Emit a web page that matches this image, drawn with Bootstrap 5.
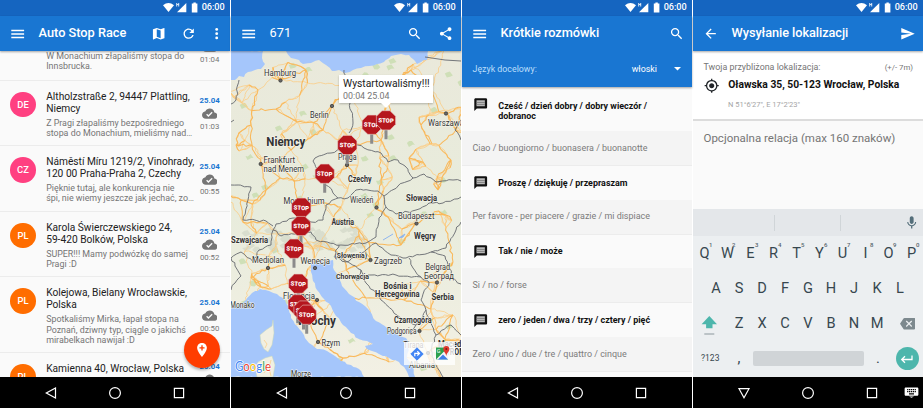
<!DOCTYPE html>
<html lang="pl">
<head>
<meta charset="utf-8">
<meta name="viewport" content="width=device-width, initial-scale=1">
<title>Auto Stop Race</title>
<link href="https://cdn.jsdelivr.net/npm/bootstrap@5.3.0/dist/css/bootstrap.min.css" rel="stylesheet">
<style>
  body{width:923px;height:408px;overflow:hidden;background:#fff;font-family:Roboto,"Noto Sans",sans-serif;line-height:1}
  svg{display:block;flex:none}
  .phones{gap:1px}
  .phone{width:230px;height:408px;background:#fafafa}
  .statusbar{height:16px;background:#1565c0;color:#fff;font-size:9.1px;font-weight:500;padding-right:5.3px;gap:2.6px}
  .appbar{height:35px;background:#1976d2;color:#fff;padding:0 10.4px}
  .appbar .caption{font-size:12.75px;font-weight:500;padding-left:12.8px;white-space:nowrap}
  .phrases .caption{letter-spacing:-.05px}
  .send .caption{letter-spacing:-.07px}
  .lifted{box-shadow:0 1px 2px rgba(0,0,0,.35);z-index:2;position:relative}
  .ic{width:15.4px;height:15.4px;fill:currentColor}
  .dots3{margin:0 -4.6px 0 -4px}
  .reload{margin:0 16px 0 15px}
  .pull{margin-right:-3px}
  .sysnav{height:31px;background:#000;padding:0 43.3px}
  .screen{height:326px;overflow:hidden}
  .feed{margin-top:-36px}
  .entry{border-bottom:1px solid #ececec;padding:10px 0 8px 10.2px;height:65.6px;background:#fafafa}
  .entry.tall{height:76px}
  .face{width:25.6px;height:25.6px;margin-top:1px;font-size:9.4px;color:#fff;font-weight:500}
  .pink{background:#ff4081}.orange{background:#ff6d00}
  .words{margin-left:10.4px;width:149.500px;white-space:nowrap}
  .place{font-size:10.2px;line-height:12.1px;color:#212121}
  .note{font-size:8.88px;line-height:10.25px;color:#757575;margin-top:2.8px}
  .stamp{width:28px;font-size:7.8px;color:#757575;gap:1.2px}
  .stamp b{color:#1976d2;font-weight:700}
  .fabzone{right:0;bottom:31px;width:64px;height:60px}
  .fab{right:10px;bottom:9.3px;width:36px;height:36px;background:#ff3d00;box-shadow:0 2px 3px rgba(0,0,0,.3)}
  .lang{height:36px;background:#1976d2;padding:0 11px 0 10.5px;font-size:8.85px;color:#bbdefb}
  .lang svg{margin-left:17px}
  .phraselist{height:290px;overflow:hidden}
  .ask{background:#fafafa;height:34.7px;padding:0 11px;color:#111;font-size:8.95px;font-weight:700;line-height:10.4px;border-top:1px solid #ececec}
  .ask.two{height:44px;border:0}
  .ask.two .ic{margin-top:10px}
  .ask.two .words2{margin-top:13.5px}
  .ask .words2{padding-left:9.9px}
  .reply{background:#f4f4f4;height:34px;padding-left:10.5px;font-size:8.95px;color:#7b7b7b}
  .where{background:#fff;height:68px;padding:12.4px 10px 0 10.5px;color:#757575;font-size:8.9px}
  .place-row{margin-top:5.500px}
  .exact{font-size:10.3px;font-weight:700;color:#111;padding-left:9.3px}
  .gps{font-size:7.5px;color:#a5a5a5;padding-left:24.5px;margin-top:7.5px}
  .margin-err{font-size:7.8px}
  .rel{height:88px;border-top:2px solid #dcdcdc;padding:11.5px 10.5px;font-size:11.5px;color:#757575}
  .keys{height:168px;margin-top:2px;background:#eceff1;color:#37474f;font-size:14.6px}
  .hints{height:27px;background:#e4e7ea}
  .hints i{width:1px;height:16px;background:#d0d5d8}
  .hints i:first-child{margin-left:81px}
  .hints i+i{margin-left:65px}
  .krow{height:35px}
  .key{width:23px;text-align:center;position:relative}
  .key sup{position:absolute;font-size:6px;font-weight:500;top:-1px;left:16px;color:#55656d}
  .sym{width:34.5px;font-size:8.5px}
  .space{width:111px;height:15px;background:#d0d4d7;border-radius:2px;margin:0 2.5px}
  .enter{width:23px;height:23px;background:#4db6ac;color:#fff;margin-left:6px}
  .bubble{left:108px;top:24px;width:94px;height:28px;background:#fff;padding:4px 0 0 4px;white-space:nowrap;box-shadow:0 1px 2px rgba(0,0,0,.25);font-size:10.3px;color:#212121}
  .bubble small{display:block;font-size:8.9px;color:#757575;margin-top:3px}
  .bubble svg{left:42px;top:28px}
  .mapbtns{left:173px;top:291px;width:51px;height:23px;background:rgba(255,255,255,.78)}
</style>
<script src="https://cdn.jsdelivr.net/npm/bootstrap@5.3.0/dist/js/bootstrap.bundle.min.js"></script>
</head>
<body>
<svg width="0" height="0" class="position-absolute">
  <symbol id="menu" viewBox="0 0 24 24"><path d="M2 19h20v-2.400H2V19zm0-5.400h20v-2.400H2v2.400zm0-7.800v2.400h20V5.800H2z"/></symbol>
  <symbol id="map" viewBox="0 0 24 24"><path d="M20.5 3l-.16.03L15 5.1 9 3 3.36 4.9c-.21.07-.36.25-.36.48V20.5c0 .28.22.5.5.5l.16-.03L9 18.9l6 2.1 5.64-1.9c.21-.07.36-.25.36-.48V3.5c0-.28-.22-.5-.5-.5zM15 19l-6-2.11V5l6 2.11V19z"/></symbol>
  <symbol id="refresh" viewBox="0 0 24 24"><path d="M17.65 6.35A7.958 7.958 0 0012 4c-4.42 0-7.99 3.58-7.99 8s3.57 8 7.99 8c3.73 0 6.84-2.55 7.73-6h-2.08A5.99 5.99 0 0112 18c-3.31 0-6-2.69-6-6s2.69-6 6-6c1.66 0 3.14.69 4.22 1.78L13 11h7V4l-2.35 2.35z"/></symbol>
  <symbol id="more" viewBox="0 0 24 24"><circle cx="12" cy="5.4" r="2.2"/><circle cx="12" cy="12" r="2.2"/><circle cx="12" cy="18.6" r="2.2"/></symbol>
  <symbol id="search" viewBox="0 0 24 24"><path d="M15.5 14h-.79l-.28-.27A6.471 6.471 0 0016 9.5 6.5 6.5 0 109.5 16c1.61 0 3.09-.59 4.23-1.57l.27.28v.79l5 4.99L20.49 19l-4.99-5zm-6 0C7.01 14 5 11.99 5 9.5S7.01 5 9.5 5 14 7.01 14 9.5 11.99 14 9.5 14z"/></symbol>
  <symbol id="share" viewBox="0 0 24 24"><path d="M18 16.08c-.76 0-1.44.3-1.96.77L8.91 12.7c.05-.23.09-.46.09-.7s-.04-.47-.09-.7l7.05-4.11c.54.5 1.25.81 2.04.81 1.66 0 3-1.34 3-3s-1.34-3-3-3-3 1.34-3 3c0 .24.04.47.09.7L8.04 9.81C7.5 9.31 6.79 9 6 9c-1.66 0-3 1.34-3 3s1.34 3 3 3c.79 0 1.5-.31 2.04-.81l7.12 4.16c-.05.21-.08.43-.08.65 0 1.61 1.31 2.92 2.92 2.92s2.92-1.31 2.92-2.92-1.31-2.92-2.92-2.92z"/></symbol>
  <symbol id="send" viewBox="0 0 24 24"><path d="M2.01 21L23 12 2.01 3 2 10l15 2-15 2z"/></symbol>
  <symbol id="back" viewBox="0 0 24 24"><path d="M20 11H7.83l5.59-5.59L12 4l-8 8 8 8 1.41-1.41L7.83 13H20v-2z"/></symbol>
  <symbol id="target" viewBox="0 0 24 24"><path d="M12 8c-2.21 0-4 1.79-4 4s1.79 4 4 4 4-1.79 4-4-1.79-4-4-4zm8.94 3A8.994 8.994 0 0013 3.06V1h-2v2.06A8.994 8.994 0 003.06 11H1v2h2.06A8.994 8.994 0 0011 20.94V23h2v-2.06A8.994 8.994 0 0020.94 13H23v-2h-2.06zM12 19c-3.87 0-7-3.13-7-7s3.13-7 7-7 7 3.13 7 7-3.13 7-7 7z"/></symbol>
  <symbol id="cloud" viewBox="0 0 24 24"><path d="M19.35 10.04C18.67 6.59 15.64 4 12 4 9.11 4 6.6 5.64 5.35 8.04 2.34 8.36 0 10.91 0 14c0 3.31 2.69 6 6 6h13c2.76 0 5-2.24 5-5 0-2.64-2.05-4.78-4.65-4.96zM10 17l-3.5-3.5 1.41-1.41L10 14.17 15.18 9l1.41 1.41L10 17z"/></symbol>
  <symbol id="chat" viewBox="0 0 24 24"><path d="M20 2H4c-1.1 0-2 .9-2 2v18l4-4h14c1.1 0 2-.9 2-2V4c0-1.1-.9-2-2-2z"/><path fill="#b8b8b8" d="M5.500 5.200h13v9.400h-13z"/><path fill="#777" d="M5.500 7.800h13v1h-13zM5.500 11h13v1h-13z"/></symbol>
  <symbol id="mic" viewBox="0 0 24 24"><path fill="#546e7a" d="M12 14c1.660 0 3-1.340 3-3V5c0-1.660-1.340-3-3-3S9 3.340 9 5v6c0 1.660 1.340 3 3 3zm5.300-3c0 3-2.540 5.100-5.300 5.100S6.700 14 6.700 11H5c0 3.410 2.720 6.230 6 6.720V21h2v-3.280c3.280-.48 6-3.300 6-6.720h-1.700z"/></symbol>
  <symbol id="erase" viewBox="0 0 24 24"><path fill="#7d898e" d="M22 3H7c-.69 0-1.230.35-1.590.88L0 12l5.410 8.110c.36.53.9.89 1.590.89h15c1.100 0 2-.9 2-2V5c0-1.100-.9-2-2-2zm-3 12.590L17.590 17 14 13.410 10.410 17 9 15.590 12.590 12 9 8.410 10.410 7 14 10.590 17.590 7 19 8.410 15.410 12 19 15.590z"/></symbol>
  <symbol id="kbd" viewBox="0 0 24 24"><path d="M21 4H3c-1.100 0-2 .9-2 2v9c0 1.100.9 2 2 2h18c1.100 0 2-.9 2-2V6c0-1.100-.9-2-2-2zm-10 2.500h2v2h-2zm0 3h2v2h-2zm-3-3h2v2H8zm0 3h2v2H8zm-1 2H5v-2h2zm0-3H5v-2h2zM16 15H8v-2h8zm0-3.500h-2v-2h2zm0-3h-2v-2h2zm3 3h-2v-2h2zm0-3h-2v-2h2zM8 18.500h8L12 20.500z"/></symbol>
  <symbol id="signals" viewBox="0 0 36 12"><g fill="#fff"><path d="M0 3.200Q5.500-1.300 11 3.200L5.500 10z"/><path d="M23.300 1v9.300H14z"/><path d="M13.200 1h1v1h1V1h1v3.400h-1V3.100h-1v1.300h-1z" opacity=".85"/><path d="M28.800 1.400h1.600V.5h2.400v.9h1.600v9h-5.600z"/></g></symbol>
  <symbol id="triL" viewBox="0 0 16 16"><path d="M12.500 3v10L3.300 8z" fill="none" stroke="#fff" stroke-width="1.200"/></symbol>
  <symbol id="triD" viewBox="0 0 16 16"><path d="M3 3.700h10L8 12.700z" fill="none" stroke="#fff" stroke-width="1.200"/></symbol>
  <symbol id="home" viewBox="0 0 16 16"><circle cx="8" cy="8" r="5.400" fill="none" stroke="#fff" stroke-width="1.200"/></symbol>
  <symbol id="recent" viewBox="0 0 16 16"><path d="M3.400 3.400h9.200v9.200H3.400z" fill="none" stroke="#fff" stroke-width="1.200"/></symbol>
  <symbol id="stop" viewBox="-11 -11 22 32"><path d="M-1.500 8h3v11h-3z" fill="#8b8b8b"/><path d="M-4-9.600h8L9.600-4v8L4 9.600h-8L-9.600 4v-8z" fill="#b5161d" stroke="#e9c9c4" stroke-width=".6"/><text x="0" y="2.300" font-size="6" font-weight="900" fill="#fff" text-anchor="middle" transform="rotate(3)">STOP</text></symbol>
</svg>

<main class="phones d-flex">

  <!-- journal -->
  <section class="phone position-relative flex-shrink-0 d-flex flex-column">
    <div class="statusbar d-flex align-items-center justify-content-end"><svg width="36" height="12"><use href="#signals"/></svg><span>06:00</span></div>
    <div class="appbar lifted d-flex align-items-center">
      <svg class="ic"><use href="#menu"/></svg><span class="caption me-auto">Auto Stop Race</span>
      <svg class="ic"><use href="#map"/></svg><svg class="ic reload"><use href="#refresh"/></svg><svg class="ic dots3"><use href="#more"/></svg>
    </div>
    <div class="screen">
      <div class="feed">
        <div class="entry d-flex"><div class="face"></div><div class="words d-flex flex-column justify-content-end"><div class="note">W Monachium złapaliśmy stopa do<br>Innsbrucka.</div></div><div class="stamp d-flex flex-column align-items-center justify-content-end"><svg class="ic"><use href="#cloud"/></svg><span class="mb-2">01:04</span></div></div>
        <div class="entry d-flex"><div class="face pink rounded-circle d-flex align-items-center justify-content-center">DE</div><div class="words"><div class="place">Altholzstraße 2, 94447 Plattling,<br>Niemcy</div><div class="note">Z Pragi złapaliśmy bezpośredniego<br>stopa do Monachium, mieliśmy nad…</div></div><div class="stamp d-flex flex-column align-items-center justify-content-center"><b>25.04</b><svg class="ic"><use href="#cloud"/></svg><span>01:03</span></div></div>
        <div class="entry d-flex"><div class="face pink rounded-circle d-flex align-items-center justify-content-center">CZ</div><div class="words"><div class="place">Náměstí Míru 1219/2, Vinohrady,<br>120 00 Praha-Praha 2, Czechy</div><div class="note">Pięknie tutaj, ale konkurencja nie<br>śpi, nie wiemy jeszcze jak jechać, zo…</div></div><div class="stamp d-flex flex-column align-items-center justify-content-center"><b>25.04</b><svg class="ic"><use href="#cloud"/></svg><span>00:55</span></div></div>
        <div class="entry d-flex"><div class="face orange rounded-circle d-flex align-items-center justify-content-center">PL</div><div class="words"><div class="place">Karola Świerczewskiego 24,<br>59-420 Bolków, Polska</div><div class="note">SUPER!!! Mamy podwózkę do samej<br>Pragi :D</div></div><div class="stamp d-flex flex-column align-items-center justify-content-center"><b>25.04</b><svg class="ic"><use href="#cloud"/></svg><span>00:52</span></div></div>
        <div class="entry tall d-flex"><div class="face orange rounded-circle d-flex align-items-center justify-content-center">PL</div><div class="words"><div class="place">Kolejowa, Bielany Wrocławskie,<br>Polska</div><div class="note">Spotkaliśmy Mirka, łapał stopa na<br>Poznań, dziwny typ, ciągle o jakichś<br>mirabelkach nawijał :D</div></div><div class="stamp d-flex flex-column align-items-center justify-content-center"><b>25.04</b><svg class="ic"><use href="#cloud"/></svg><span>00:50</span></div></div>
        <div class="entry d-flex"><div class="face orange rounded-circle d-flex align-items-center justify-content-center">PL</div><div class="words"><div class="place">Kamienna 40, Wrocław, Polska</div></div><div class="stamp d-flex flex-column align-items-center"><b>25.04</b><svg class="ic"><use href="#cloud"/></svg></div></div>
      </div>
    </div>
    <div class="fabzone position-absolute">
      <div class="fab position-absolute rounded-circle d-flex align-items-center justify-content-center"><svg width="16" height="16" viewBox="0 0 24 24"><path fill="#fff" d="M12 1.500c-4.100 0-7.300 3.100-7.300 7.200C4.700 14.100 12 22.500 12 22.500s7.300-8.400 7.300-13.800c0-4.100-3.200-7.200-7.300-7.200z"/><path fill="#ff3d00" d="M11 5h2v2.800h2.800v2H13v2.800h-2V9.800H8.200v-2H11z"/></svg></div>
    </div>
    <div class="sysnav d-flex align-items-center justify-content-between"><svg width="16" height="16"><use href="#triL"/></svg><svg width="16" height="16"><use href="#home"/></svg><svg width="16" height="16"><use href="#recent"/></svg></div>
  </section>

  <!-- route map -->
  <section class="phone position-relative flex-shrink-0 d-flex flex-column">
    <div class="statusbar d-flex align-items-center justify-content-end"><svg width="36" height="12"><use href="#signals"/></svg><span>06:00</span></div>
    <div class="appbar lifted d-flex align-items-center">
      <svg class="ic"><use href="#menu"/></svg><span class="caption me-auto fw-normal">671</span>
      <svg class="ic me-3"><use href="#search"/></svg><svg class="ic pull"><use href="#share"/></svg>
    </div>
    <div class="screen position-relative">
      <svg id="europe" width="230" height="326" viewBox="0 51 230 326" font-family="Roboto,sans-serif">
        <defs>
          <linearGradient id="soil" x1="0" y1="0" x2="0" y2="1"><stop offset="0" stop-color="#eae9db"/><stop offset=".5" stop-color="#e8ecdc"/><stop offset="1" stop-color="#f3f0e4"/></linearGradient>
        </defs>
        <rect y="51" width="230" height="326" fill="url(#soil)"/>
        <g id="woods" fill="#c6dcab" opacity=".75"></g>
        <g id="alps" fill="#d3d8c8" opacity=".7"></g>
        <g id="roads" fill="none" stroke-linejoin="round"></g>
        <g id="seas" fill="#a5c6fb"></g>
        <g fill="#f1efe2" stroke="#c8d9b8" stroke-width=".5"><path d="M42 320l-1 6-6 4-6 5 1 8 3 6 4 3 4-7 2-12z"/><path d="M41 356l-7 2-7 4-3 5 2 10h16l2-12z"/></g>
        <path d="M33 340l3 4-2 4M32 362l4 5-3 6M40 360l-2 8 2 8" fill="none" stroke="#fbcf8a" stroke-width=".8"/>
        <path d="M152 240l10-6M168 238l6-4-2 3z" fill="#8fb6ee" stroke="#8fb6ee"/>
        <g id="borders" fill="none" stroke="#6d7075" stroke-width=".95" stroke-linejoin="round"></g>
        <g id="dots" fill="#666" stroke="#333" stroke-width=".7"></g>
        <g id="labels" fill="#333" stroke="#f7f6ee" stroke-width="1.100" paint-order="stroke"></g>
        <g id="signs"></g>
        <g font-size="13.500" font-family="Lato,sans-serif" stroke="#fff" stroke-width="1.400" paint-order="stroke"><text x="4" y="371" textLength="36" lengthAdjust="spacingAndGlyphs"><tspan fill="#4285f4">G</tspan><tspan fill="#ea4335">o</tspan><tspan fill="#fbbc05">o</tspan><tspan fill="#4285f4">g</tspan><tspan fill="#34a853">l</tspan><tspan fill="#ea4335">e</tspan></text></g>
      </svg>
      <div class="bubble position-absolute">Wystartowaliśmy!!!<small>00:04 25.04</small><svg class="position-absolute" width="10" height="5"><path d="M0 0h10L5 5z" fill="#fff"/></svg></div>
      <div class="mapbtns position-absolute d-flex align-items-center justify-content-around">
        <svg width="14" height="14" viewBox="0 0 14 14"><path d="M7 .8L13.200 7 7 13.200.8 7z" fill="#4285f4" stroke="#4285f4" stroke-linejoin="round"/><path d="M4.800 9.300V6.400h4M7.300 4.300l2.200 2.100-2.200 2.100" fill="none" stroke="#fff" stroke-width="1.200"/></svg>
        <svg width="15" height="15" viewBox="0 0 15 15"><path d="M1 1.500h12v12H1z" fill="#2da04e"/><path d="M1 13.500L12.500 2H13v11.500z" fill="#f5f5f5"/><path d="M3 13.500l5-5 5 5z" fill="#3f7fe8"/><text x="1.800" y="6.500" font-size="5.500" fill="#fff">G</text><path d="M11.300 0a3 3 0 013 3c0 2.500-2.300 3.500-3 7-.7-3.500-3-4.500-3-7a3 3 0 013-3z" fill="#e0392c"/><circle cx="11.300" cy="3" r="1" fill="#7d1a12"/></svg>
      </div>
    </div>
    <div class="sysnav d-flex align-items-center justify-content-between"><svg width="16" height="16"><use href="#triL"/></svg><svg width="16" height="16"><use href="#home"/></svg><svg width="16" height="16"><use href="#recent"/></svg></div>
  </section>

  <!-- phrasebook -->
  <section class="phone phrases flex-shrink-0 d-flex flex-column">
    <div class="statusbar d-flex align-items-center justify-content-end"><svg width="36" height="12"><use href="#signals"/></svg><span>06:00</span></div>
    <div class="lifted">
      <div class="appbar d-flex align-items-center"><svg class="ic"><use href="#menu"/></svg><span class="caption me-auto">Krótkie rozmówki</span><svg class="ic pull"><use href="#search"/></svg></div>
      <div class="lang d-flex align-items-center"><span class="me-auto">Język docelowy:</span><span class="text-white">włoski</span><svg width="7" height="4"><path d="M0 0h7L3.500 3.600z" fill="#fff"/></svg></div>
    </div>
    <div class="phraselist">
      <div class="ask two d-flex"><svg class="ic"><use href="#chat"/></svg><div class="words2">Cześć / dzień dobry / dobry wieczór /<br>dobranoc</div></div>
      <div class="reply d-flex align-items-center">Ciao / buongiorno / buonasera / buonanotte</div>
      <div class="ask d-flex align-items-center"><svg class="ic"><use href="#chat"/></svg><div class="words2">Proszę / dziękuję / przepraszam</div></div>
      <div class="reply d-flex align-items-center">Per favore - per piacere / grazie / mi dispiace</div>
      <div class="ask d-flex align-items-center"><svg class="ic"><use href="#chat"/></svg><div class="words2">Tak / nie / może</div></div>
      <div class="reply d-flex align-items-center">Si / no / forse</div>
      <div class="ask d-flex align-items-center"><svg class="ic"><use href="#chat"/></svg><div class="words2">zero / jeden / dwa / trzy / cztery / pięć</div></div>
      <div class="reply d-flex align-items-center">Zero / uno / due / tre / quattro / cinque</div>
      <div class="ask"></div>
    </div>
    <div class="sysnav d-flex align-items-center justify-content-between"><svg width="16" height="16"><use href="#triL"/></svg><svg width="16" height="16"><use href="#home"/></svg><svg width="16" height="16"><use href="#recent"/></svg></div>
  </section>

  <!-- send location -->
  <section class="phone send flex-shrink-0 d-flex flex-column">
    <div class="statusbar d-flex align-items-center justify-content-end"><svg width="36" height="12"><use href="#signals"/></svg><span>06:00</span></div>
    <div class="appbar lifted d-flex align-items-center"><svg class="ic"><use href="#back"/></svg><span class="caption me-auto">Wysyłanie lokalizacji</span><svg class="ic pull"><use href="#send"/></svg></div>
    <div class="where">
      <div class="d-flex justify-content-between align-items-center"><span>Twoja przybliżona lokalizacja:</span><span class="margin-err">(+/- 7m)</span></div>
      <div class="place-row d-flex align-items-center text-dark"><svg class="ic"><use href="#target"/></svg><span class="exact">Oławska 35, 50-123 Wrocław, Polska</span></div>
      <div class="gps">N 51°6'27", E 17°2'23"</div>
    </div>
    <div class="rel">Opcjonalna relacja (max 160 znaków)</div>
    <div class="keys">
      <div class="hints d-flex align-items-center"><i></i><i></i><svg class="ic ms-auto me-1"><use href="#mic"/></svg></div>
      <div class="krow d-flex align-items-center"><span class="key">Q<sup>1</sup></span><span class="key">W<sup>2</sup></span><span class="key">E<sup>3</sup></span><span class="key">R<sup>4</sup></span><span class="key">T<sup>5</sup></span><span class="key">Y<sup>6</sup></span><span class="key">U<sup>7</sup></span><span class="key">I<sup>8</sup></span><span class="key">O<sup>9</sup></span><span class="key">P<sup>0</sup></span></div>
      <div class="krow d-flex align-items-center justify-content-center"><span class="key">A</span><span class="key">S</span><span class="key">D</span><span class="key">F</span><span class="key">G</span><span class="key">H</span><span class="key">J</span><span class="key">K</span><span class="key">L</span></div>
      <div class="krow d-flex align-items-center"><svg width="34.500" height="22" viewBox="0 0 34.500 22"><path d="M16.300 3L24 11.300h-4.500v4h-6.400v-4H8.600z" fill="#4db6ac"/><path d="M11.300 21h10" stroke="#8b979c" stroke-width="1"/></svg><span class="key">Z</span><span class="key">X</span><span class="key">C</span><span class="key">V</span><span class="key">B</span><span class="key">N</span><span class="key">M</span><svg class="ic ms-auto me-2"><use href="#erase"/></svg></div>
      <div class="krow d-flex align-items-center"><span class="sym text-center">?123</span><span class="key">,</span><span class="space"></span><span class="key">.</span><span class="enter rounded-circle d-flex align-items-center justify-content-center"><svg width="14" height="10" viewBox="0 0 14 10"><path d="M12 1.500v4H2M5 2.200L1.700 5.500 5 8.800" fill="none" stroke="#fff" stroke-width="1.300"/></svg></span></div>
    </div>
    <div class="sysnav d-flex align-items-center justify-content-between position-relative"><svg width="16" height="16"><use href="#triD"/></svg><svg width="16" height="16"><use href="#home"/></svg><svg width="16" height="16"><use href="#recent"/></svg><svg class="position-absolute end-0 me-1" width="15" height="15" fill="#fff"><use href="#kbd"/></svg></div>
  </section>
</main>

<script>
  // Repeatable noise, so that the map is the same on every load
  let seed = 11;
  const rnd = () => (seed = (seed * 16807) % 2147483647) / 2147483647;
  const el = (id, html) => document.getElementById(id).innerHTML += html;

  // Turns a coarse polyline into a natural looking one
  function wiggle(points, amount) {
    const p = points.trim().split(' ').map(s => s.split(',').map(Number));
    let d = 'M' + p[0];
    for (let i = 1; i < p.length; i++) {
      const [x0, y0] = p[i - 1], [x1, y1] = p[i], n = Math.max(1, Math.round(Math.hypot(x1 - x0, y1 - y0) / 3.5));
      for (let k = 1; k < n; k++) {
        const t = k / n;
        d += 'L' + (x0 + (x1 - x0) * t + (rnd() - .5) * amount).toFixed(1) + ',' + (y0 + (y1 - y0) * t + (rnd() - .5) * amount).toFixed(1);
      }
      d += 'L' + p[i];
    }
    return d;
  }

  ['0,51 32,51 31,58 34,64 30,69 24,70 17,72 13,77 8,76 4,80 0,80',
   '55,51 60,58 68,60 72,64 80,63 88,60 95,65 101,71 108,70 114,73 122,70 130,68 138,66 146,64 153,62 160,56 170,54 178,55 182,59 186,64 190,62 196,60 197,51',
   '80,263 87,261 94,262 102,260 103,270 107,276 111,286 118,294 128,302 137,309 145,321 156,328 166,334 175,338 178,347 176,358 182,366 184,377 178,377 175,370 168,362 158,358 148,354 138,350 134,346 142,344 136,341 128,339 120,333 112,325 105,316 100,306 93,299 86,290 82,281 80,272',
   '0,308 8,305 15,300 21,293 29,289 38,291 46,294 52,298 57,306 60,318 66,326 71,332 78,343 86,349 96,351 104,356 110,361 120,365 128,369 133,377 0,377'
  ].forEach(s => el('seas', `<path d="${wiggle(s, 1.6)}Z"/>`));

  ['113,70 118,90 119,103 122,123 118,133', '82,161 90,179 107,198 117,198 125,190 147,191 153,196 167,186 182,178',
   '82,161 84,158 100,153 110,149 122,143 133,148 150,153 157,162 167,160 174,166 182,178', '182,178 193,174 205,182 222,180 230,181',
   '153,196 155,207 165,214 185,210 198,203 212,203 230,197', '107,198 95,205 92,220 80,222 62,218 45,224 42,230',
   '42,230 50,236 80,232 85,240 110,245 135,243 145,237 148,218 155,207', '108,245 103,257 115,262 128,256 135,250 145,243',
   '145,243 160,255 175,258 200,252 215,248 225,230 230,222', '0,185 20,187 17,200 12,220 35,221 42,226',
   '0,258 10,252 22,262 28,250 40,245 42,230', '110,258 130,270 125,280 140,275 165,275 190,277 198,282 190,300 195,310 185,325 172,320 150,300 135,283 130,270',
   '178,258 182,268 190,277', '195,310 205,335 200,350 205,365 212,377', '185,325 180,335', '205,335 220,325 230,335', '200,252 214,256 222,278 230,284',
   '8,80 5,100 0,104', '0,122 3,120', '0,290 4,283 10,276 4,266 0,258', '230,120 224,130 230,140'
  ].forEach(s => el('borders', `<path d="${wiggle(s, 2.2)}"/>`));
  el('borders', '<path d="M194 57L214 60 230 61"/>');

  // Road network: every town is joined to its nearest neighbours
  const towns = [[49,80],[101,106],[215,113],[30,164],[116,165],[70,210],[145,207],[185,223],[37,268],[84,265],[139,260],[206,282],[87,342],[84,300],[188,331],[197,353],[45,109],[92,130],[62,180],[35,190],[153,113],[150,140],[178,158],[192,162],[180,70],[118,85],[27,90],[5,145],[107,140],[75,70],[190,125],[150,180],[153,213],[110,207],[128,230],[112,255],[68,232],[20,222],[20,278],[30,287],[72,284],[112,358],[158,362],[135,298],[173,300],[215,340],[222,315],[222,262],[215,215],[207,190],[225,130],[220,160],[66,122],[20,125],[60,150],[200,88],[160,85],[10,200],[170,245],[100,320]];
  const major = towns.length;
  while (towns.length < major + 125) towns.push([rnd() * 240 - 5, 48 + rnd() * 335]);
  let thin = '', wide = '';
  towns.forEach((a, i) => {
    const near = towns.map((b, j) => [Math.hypot(a[0] - b[0], a[1] - b[1]), j]).sort((p, q) => p[0] - q[0]).slice(1, i < major ? 5 : 4);
    near.forEach(([, j]) => {
      const d = wiggle(a.join() + ' ' + towns[j].join(), 2.6);
      if (i < major && rnd() < .7) wide += d; else thin += d;
    });
  });
  el('roads', `<path d="${thin}" stroke="#fccb80" stroke-width=".75"/><path d="${wide}" stroke="#f9b85a" stroke-width="1.05"/>`);

  for (let i = 0; i < 60; i++) {
    const x = rnd() * 230, y = 60 + rnd() * 310;
    el('woods', `<path d="${wiggle(`${x},${y} ${x + 5},${y - 2} ${x + 8},${y + 2} ${x + 2},${y + 4}`, 3)}Z"/>`);
  }
  for (let i = 0; i < 60; i++) {
    const x = 10 + rnd() * 120, y = 228 + rnd() * 22;
    el('alps', `<path d="${wiggle(`${x},${y} ${x + 6},${y - 3} ${x + 9},${y + 1} ${x + 3},${y + 3}`, 3)}Z"/>`);
  }

  [[49.5,80.5],[101,106],[215,113.5],[29.7,164],[116,165],[145.5,207.5],[185.5,223.5],[37,268],[84,268],[139.5,260],[206,282.5],[87,342],[86,300],[188.5,331],[197,353]]
    .forEach(([x, y]) => el('dots', `<circle cx="${x}" cy="${y}" r="1.7"/>`));

  // text, x, baseline, drawn width, weight, size
  [['Hamburg',33,75.5,32],['Berlin',79,117.7,18.5],['Warszawa',197,126,36],['Niemcy',35.3,145.5,39,700,12],
   ['Frankfurt',32.5,163,31.5],['nad Menem',32.5,172,40.5],['Praga',107,160,18.5],['Czechy',117,182,23.5,700],
   ['Słowacja',175,200.5,31,700],['Wiedeń',119,203,23.5],['Monachium',52.5,204.3,41],['Budapeszt',167,218.7,36.5],
   ['Austria',100.5,225.3,22.5,700],['Węgry',183,238.5,22,700],['Szwajcaria',0,242.7,37,700],['Mediolan',21,263.3,32],
   ['Wenecja',69.5,264.3,29.5],['(Słowenia)',103.5,258,32.5,700,8],['Zagrzeb',143,264.3,28],['Belgrad',194.5,269.7,24.5],
   ['Београд',193,278.5,30],['Chorwacja',105,278.5,33,700,8],['Bośnia i',152.5,288.5,28,700],['Hercegowina',144,297.2,44.5,700],
   ['Serbia',200.5,300,22.5,700],['Florencja',52,299,32],['Monako',-1,307.5,24.5],['Włochy',66,324.5,39,700,12],
   ['Czarnogóra',163,322.7,37.5,700],['Podgorica',156,334.2,29.5],['Rzym',90.5,345.7,18.5],['Tirana',172.5,347.5,20],
   ['Macedonia',207,346.5,38,700],['(FYROM)',208,354.5,29,700],['Albania',178,367.5,26],['Morze',60,376.7,20]]
    .forEach(([t, x, y, w, b = 400, s = 8.6]) => el('labels', `<text x="${x}" y="${y}" font-weight="${b}" font-size="${s}" textLength="${w}" lengthAdjust="spacingAndGlyphs">${t}</text>`));

  [[140.7,124.7],[155,120.3],[116.3,145],[93.7,173.7],[70.3,207.7],[70,226],[63,248.7],[67.3,283.7],[66.7,304.3],[72.5,310.5],[75.7,314.7]]
    .forEach(([x, y]) => el('signs', `<use href="#stop" x="${x - 11}" y="${y - 11}" width="22" height="32"/>`));
</script>
</body>
</html>
